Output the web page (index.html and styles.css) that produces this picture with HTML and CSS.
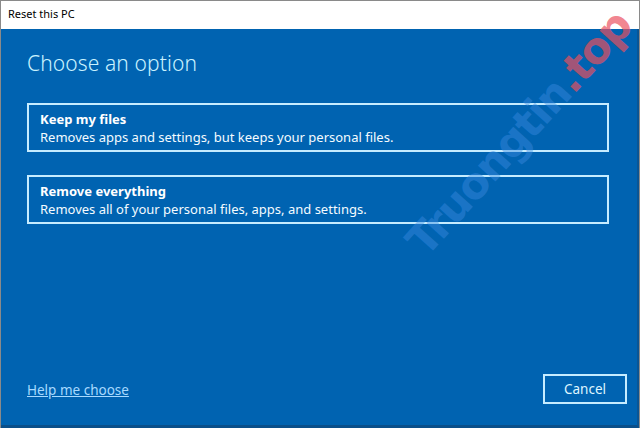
FILE: index.html
```html
<!DOCTYPE html>
<html>
<head>
<meta charset="utf-8">
<link rel="stylesheet" href="styles.css">
</head>
<body>
<div class="window">
  <div class="titlebar">Reset this PC</div>
  <div class="content">
    <h1 class="heading">Choose an option</h1>
    <div class="options">
      <div class="option">
        <div class="opt-title">Keep my files</div>
        <div class="opt-desc">Removes apps and settings, but keeps your personal files.</div>
      </div>
      <div class="option">
        <div class="opt-title">Remove everything</div>
        <div class="opt-desc">Removes all of your personal files, apps, and settings.</div>
      </div>
    </div>
    <div class="footer">
      <a class="help">Help me choose</a>
      <div class="cancel">Cancel</div>
    </div>
  </div>
  <div class="watermark"><span class="wm-a">Truongtin</span><span class="wm-b">.top</span></div>
</div>
</body>
</html>
```
FILE: styles.css
```css
* { box-sizing: border-box; }
html, body { margin: 0; padding: 0; }
body {
  width: 640px;
  height: 428px;
  overflow: hidden;
  font-family: "Noto Sans", "Open Sans", sans-serif;
  background: #ffffff;
}
.window {
  position: relative;
  width: 640px;
  height: 428px;
  border: 1px solid #8a8a8a;
  border-bottom: none;
  display: flex;
  flex-direction: column;
  overflow: hidden;
}
.titlebar {
  height: 28px;
  background: #ffffff;
  color: #000;
  font-size: 11px;
  padding: 5px 0 0 7px;
  flex: none;
}
.content {
  flex: 1;
  background: #0063b1;
  border-right: 2px solid #0a5594;
  border-bottom: 3px solid #0a4f8a;
  display: flex;
  flex-direction: column;
  padding: 18px 10px 21px 26px;
}
.heading {
  margin: 0;
  font-weight: 300;
  font-size: 21px;
  color: #c9f2ff;
  line-height: 32px;
  letter-spacing: 0.1px;
}
.options {
  margin-top: 24px;
  display: flex;
  flex-direction: column;
  gap: 23px;
  width: 582px;
}
.option {
  border: 2px solid #c6ecff;
  height: 49px;
  padding: 5px 0 0 11px;
  color: #ffffff;
}
.opt-title {
  font-weight: 700;
  font-size: 13px;
  line-height: 18px;
}
.opt-desc {
  font-size: 13px;
  line-height: 18px;
  color: #f4fbff;
}
.footer {
  margin-top: auto;
  display: flex;
  justify-content: space-between;
  align-items: center;
}
.help {
  color: #a8daff;
  text-decoration: underline;
  font-size: 13.5px;
  padding-top: 2px;
}
.cancel {
  width: 84px;
  height: 30px;
  border: 2px solid #c6ecff;
  color: #dff6ff;
  font-size: 13.5px;
  display: flex;
  align-items: center;
  justify-content: center;
}
.watermark {
  position: absolute;
  left: 518px;
  top: 132px;
  transform: translate(-50%, -50%) rotate(-48deg);
  font-family: "DejaVu Sans", sans-serif;
  font-weight: 700;
  font-size: 43px;
  letter-spacing: -1.5px;
  white-space: nowrap;
  pointer-events: none;
}
.wm-a { color: rgba(60, 140, 225, 0.45); }
.wm-b { color: rgba(235, 80, 95, 0.7); }
```
